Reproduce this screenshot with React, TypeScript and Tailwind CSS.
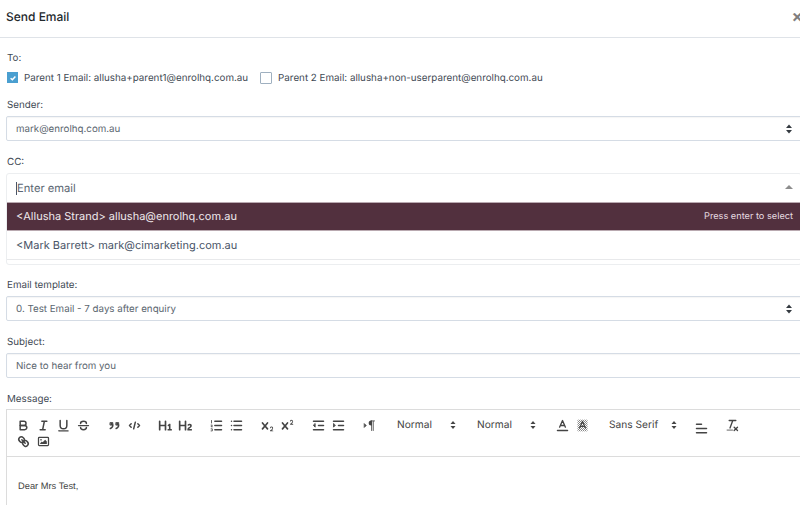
import type { ReactNode } from "react";

const font = { fontFamily: "Inter, 'Noto Sans', sans-serif" };

function Icon({ children, className = "" }: { children: ReactNode; className?: string }) {
  return (
    <svg
      viewBox="0 0 18 18"
      className={`w-[15px] h-[15px] ${className}`}
      fill="none"
      stroke="#444"
      strokeWidth={1.8}
      strokeLinecap="round"
      strokeLinejoin="round"
    >
      {children}
    </svg>
  );
}

function Btn({ children }: { children: ReactNode }) {
  return <div className="w-5 h-4 flex items-center justify-center shrink-0">{children}</div>;
}

function Group({ children }: { children: ReactNode }) {
  return <div className="flex items-center mr-[11px]">{children}</div>;
}

function Carets({ className = "" }: { className?: string }) {
  return (
    <svg viewBox="0 0 8 10" className={`w-2 h-[10px] ${className}`} fill="#343a40">
      <path d="M4 0.5 7 4H1Z" />
      <path d="M4 9.5 1 6h6Z" />
    </svg>
  );
}

function Picker({ label, width }: { label: string; width: string }) {
  return (
    <div className={`flex items-center justify-between pl-[7px] pr-[3px] h-4 text-[10.2px] text-[#444] shrink-0 ${width}`}>
      <span className="pt-[2px]">{label}</span>
      <svg viewBox="0 0 6 10" className="w-[6px] h-[10px]" fill="#444">
        <path d="M3 1 5.5 4h-5Z" />
        <path d="M3 9 .5 6h5Z" />
      </svg>
    </div>
  );
}

function SelectBox({ value }: { value: string }) {
  return (
    <div className="h-[25px] border border-[#d5dce5] rounded-[2px] flex items-center justify-between pl-[9px] pr-[8px] text-[9.75px] text-[#5c6770] shadow-[inset_0_1px_1px_rgba(0,0,0,0.04)]">
      <span className="pt-[4px]">{value}</span>
      <Carets />
    </div>
  );
}

function Label({ children, className = "" }: { children: ReactNode; className?: string }) {
  return <div className={`h-[13px] pt-[1px] text-[9.8px] leading-[13px] text-[#3f4a54] ${className}`}>{children}</div>;
}

export default function App() {
  return (
    <div className="w-[800px] h-[505px] overflow-hidden bg-white [text-rendering:geometricPrecision]" style={font}>
      <div className="w-[808px]">
        <div className="h-[38px] border-b border-[#dfe3e8] flex items-center justify-between pl-[6px] pr-[5px] pb-[3px]">
          <h5 className="text-[12px] text-[#23282c] font-medium">Send Email</h5>
          <span className="text-[17px] font-bold leading-none text-black/50">×</span>
        </div>

        <div className="px-[6px]">
          <Label className="mt-[13px] ml-px">To:</Label>
          <div className="flex items-center mt-[7px] ml-px text-[9.8px] text-[#3f4a54] h-[13px]">
            <span className="w-[11px] h-[11px] bg-[#4a9fd0] flex items-center justify-center">
              <svg viewBox="0 0 10 10" className="w-2 h-2" fill="none" stroke="#fff" strokeWidth={1.8}>
                <path d="M2 5.2 4.2 7.2 8 3" />
              </svg>
            </span>
            <span className="ml-[6px] pt-[3px]">Parent 1 Email: allusha+parent1@enrolhq.com.au</span>
            <span className="w-[12px] h-[12px] ml-[12px] border border-[#9fb0c0] rounded-[1px]" />
            <span className="ml-[6px] pt-[3px]">Parent 2 Email: allusha+non-userparent@enrolhq.com.au</span>
          </div>

          <Label className="mt-[14px] ml-px mb-[5px]">Sender:</Label>
          <SelectBox value="mark@enrolhq.com.au" />

          <Label className="mt-[14px] ml-px mb-[5px]">CC:</Label>
          <div className="h-[92px] border border-[#eceef0] rounded-[3px] text-[11px] text-[#4a5568]">
            <div className="h-[28px] flex items-center justify-between pl-[9px] pr-[8px]">
              <span className="border-l border-[#4a5568] leading-[13px] text-[#5a6672] text-[11.2px]">Enter email</span>
              <svg viewBox="0 0 8 4" className="w-2 h-1 -mt-[3px]">
                <path d="M4 0 8 4H0Z" fill="#8d8d8d" />
              </svg>
            </div>
            <div className="h-[29px] bg-[#52303e] border-y border-[#b9a9b0] flex items-center justify-between pl-[9px] pr-[8px] text-[#efe9ec]">
              <span>{"<Allusha Strand> allusha@enrolhq.com.au"}</span>
              <span className="text-[9.2px] text-[#e6dde1]">Press enter to select</span>
            </div>
            <div className="h-[29px] border-b border-[#e8e9eb] flex items-center pl-[9px]">
              {"<Mark Barrett> mark@cimarketing.com.au"}
            </div>
          </div>

          <Label className="mt-[13px] ml-px mb-[5px]">Email template:</Label>
          <SelectBox value="0. Test Email - 7 days after enquiry" />

          <Label className="mt-[14px] ml-px mb-[5px]">Subject:</Label>
          <div className="h-[25px] border border-[#d5dce5] rounded-[2px] flex items-center pl-[9px] pt-[3px] text-[9.75px] text-[#5c6770] shadow-[inset_0_1px_1px_rgba(0,0,0,0.04)]">
            Nice to hear from you
          </div>

          <Label className="mt-[14px] ml-px mb-[4px]">Message:</Label>
          <div className="border border-[#dcdcdc] h-[200px]">
            <div className="h-[47px] border-b border-[#dcdcdc] pl-[6px] pt-[7px] flex flex-wrap content-start">
              <Group>
                <Btn>
                  <Icon>
                    <path d="M5,4H9.5A2.5,2.5,0,0,1,12,6.5v0A2.5,2.5,0,0,1,9.5,9H5V4Z" />
                    <path d="M5,9h5.5A2.5,2.5,0,0,1,13,11.5v0A2.5,2.5,0,0,1,10.5,14H5V9Z" />
                  </Icon>
                </Btn>
                <Btn>
                  <Icon>
                    <path d="M7 4H13M5 14H11M8 14 10 4" />
                  </Icon>
                </Btn>
                <Btn>
                  <Icon>
                    <path d="M5,3V9a4,4,0,0,0,4,4h0a4,4,0,0,0,4-4V3" />
                    <rect x="3" y="15" width="12" height="1" rx=".5" fill="#444" strokeWidth={0.5} />
                  </Icon>
                </Btn>
                <Btn>
                  <Icon>
                    <path d="M3 9H15" strokeWidth={1.5} />
                    <path d="M12.5 6.5C12.5 5 11 4 9 4S5.5 5 5.5 6.5" />
                    <path d="M12.5 11.5C12.5 13 11 14 9 14S5.5 13 5.5 11.5" />
                  </Icon>
                </Btn>
              </Group>
              <Group>
                <Btn>
                  <Icon>
                    <rect x="4" y="5.5" width="3" height="3" fill="#444" strokeWidth={1} />
                    <rect x="11" y="5.5" width="3" height="3" fill="#444" strokeWidth={1} />
                    <path d="M7,8.5c0,2-1.5,3.5-3,4M14,8.5c0,2-1.5,3.5-3,4" />
                  </Icon>
                </Btn>
                <Btn>
                  <Icon>
                    <path d="M5 7 3 9 5 11M13 7 15 9 13 11M10 5 8 13" />
                  </Icon>
                </Btn>
              </Group>
              <Group>
                <Btn>
                  <Icon>
                    <path
                      stroke="none"
                      fill="#444"
                      d="M10,4V14a1,1,0,0,1-2,0V10H3v4a1,1,0,0,1-2,0V4A1,1,0,0,1,3,4V8H8V4a1,1,0,0,1,2,0Zm6.06787,9.209H14.98975V7.59863a.54085.54085,0,0,0-.605-.60547h-.62744a1.01119,1.01119,0,0,0-.748.29688L11.645,8.56641a.5435.5435,0,0,0-.022.8584l.28613.30762a.53861.53861,0,0,0,.84717.0332l.09912-.08789a1.2137,1.2137,0,0,0,.2417-.35254h.02246s-.01123.30859-.01123.60547V13.209H12.041a.54085.54085,0,0,0-.605.60547v.43945a.54085.54085,0,0,0,.605.60547h4.02686a.54085.54085,0,0,0,.605-.60547v-.43945A.54085.54085,0,0,0,16.06787,13.209Z"
                    />
                  </Icon>
                </Btn>
                <Btn>
                  <Icon>
                    <path
                      stroke="none"
                      fill="#444"
                      d="M16.73975,13.81445v.43945a.54085.54085,0,0,1-.605.60547H11.855a.58392.58392,0,0,1-.64893-.60547V14.0127c0-2.90527,3.39941-3.42187,3.39941-4.55469a.77675.77675,0,0,0-.84717-.78125,1.17684,1.17684,0,0,0-.83594.38477c-.2749.26367-.561.374-.85791.13184l-.4292-.34082c-.30811-.24219-.38525-.51758-.1543-.81445a2.97155,2.97155,0,0,1,2.45361-1.17676,2.45393,2.45393,0,0,1,2.68408,2.40918c0,2.45312-3.1792,2.92676-3.27832,3.93848h2.79443A.54085.54085,0,0,1,16.73975,13.81445ZM9,3A.99974.99974,0,0,0,8,4V8H3V4A1,1,0,0,0,1,4V14a1,1,0,0,0,2,0V10H8v4a1,1,0,0,0,2,0V4A.99974.99974,0,0,0,9,3Z"
                    />
                  </Icon>
                </Btn>
              </Group>
              <Group>
                <Btn>
                  <Icon>
                    <path d="M7 4H15M7 9H15M7 14H15" />
                    <path d="M3 3V6M2.5 8.5H4L2.5 10.5H4M2.5 13H4V15.5H2.5" strokeWidth={1} />
                  </Icon>
                </Btn>
                <Btn>
                  <Icon>
                    <path d="M6 4H15M6 9H15M6 14H15M3 4H3.01M3 9H3.01M3 14H3.01" />
                  </Icon>
                </Btn>
              </Group>
              <Group>
                <Btn>
                  <Icon>
                    <path
                      stroke="none"
                      fill="#444"
                      d="M15.5,15H13.861a3.858,3.858,0,0,0,1.914-2.975,1.8,1.8,0,0,0-1.6-1.751A1.921,1.921,0,0,0,12.021,11.7a0.50013,0.50013,0,1,0,.957.291h0a0.914,0.914,0,0,1,1.053-.725,0.81,0.81,0,0,1,.744.762c0,1.076-1.16971,1.86982-1.93971,2.43082A1.45639,1.45639,0,0,0,12,15.5a0.5,0.5,0,0,0,.5.5h3A0.5,0.5,0,0,0,15.5,15Z"
                    />
                    <path
                      stroke="none"
                      fill="#444"
                      d="M9.65,5.241a1,1,0,0,0-1.409.108L6,7.964,3.759,5.349A1,1,0,0,0,2.192,6.59178Q2.21541,6.6213,2.241,6.649L4.684,9.5,2.241,12.35A1,1,0,0,0,3.71,13.70722q0.02557-.02768.049-0.05722L6,11.036,8.241,13.65a1,1,0,1,0,1.567-1.24277Q9.78459,12.3777,9.759,12.35L7.316,9.5,9.759,6.651A1,1,0,0,0,9.65,5.241Z"
                    />
                  </Icon>
                </Btn>
                <Btn>
                  <Icon>
                    <path
                      stroke="none"
                      fill="#444"
                      d="M15.5,7H13.861a4.015,4.015,0,0,0,1.914-2.975,1.8,1.8,0,0,0-1.6-1.751A1.922,1.922,0,0,0,12.021,3.7a0.5,0.5,0,1,0,.957.291,0.917,0.917,0,0,1,1.053-.725,0.81,0.81,0,0,1,.744.762c0,1.077-1.164,1.925-1.934,2.486A1.423,1.423,0,0,0,12,7.5a0.5,0.5,0,0,0,.5.5h3A0.5,0.5,0,0,0,15.5,7Z"
                    />
                    <path
                      stroke="none"
                      fill="#444"
                      d="M9.65,5.241a1,1,0,0,0-1.409.108L6,7.964,3.759,5.349A1,1,0,0,0,2.192,6.59178Q2.21541,6.6213,2.241,6.649L4.684,9.5,2.241,12.35A1,1,0,0,0,3.71,13.70722q0.02557-.02768.049-0.05722L6,11.036,8.241,13.65a1,1,0,1,0,1.567-1.24277Q9.78459,12.3777,9.759,12.35L7.316,9.5,9.759,6.651A1,1,0,0,0,9.65,5.241Z"
                    />
                  </Icon>
                </Btn>
              </Group>
              <Group>
                <Btn>
                  <Icon>
                    <path d="M3 14H15M3 4H15M9 9H15" />
                    <path d="M5 7V11L3 9Z" fill="#444" strokeWidth={1} />
                  </Icon>
                </Btn>
                <Btn>
                  <Icon>
                    <path d="M3 14H15M3 4H15M9 9H15" />
                    <path d="M3 7V11L5 9Z" fill="#444" strokeWidth={1} />
                  </Icon>
                </Btn>
              </Group>
              <Group>
                <Btn>
                  <Icon>
                    <path d="M3 11 5 9 3 7Z" fill="#444" strokeWidth={1} />
                    <path d="M11,3a3,3,0,0,0,0,6h1V3Z" fill="#444" stroke="none" />
                    <path d="M11 3.5H15" strokeWidth={1} />
                    <path d="M11.5 4V15M13.5 4V15" strokeWidth={1} />
                  </Icon>
                </Btn>
              </Group>
              <div className="flex items-center mr-[11px]">
                <Picker label="Normal" width="w-[69px]" />
              </div>
              <div className="flex items-center mr-[13px]">
                <Picker label="Normal" width="w-[69px]" />
              </div>
              <div className="flex items-center mr-[10px]">
                <Btn>
                  <Icon>
                    <path d="M3 15H15" />
                    <path d="M5.5 11 9 3 12.5 11M11.6 9H6.4" strokeWidth={1.6} />
                  </Icon>
                </Btn>
                <Btn>
                  <Icon>
                    <defs>
                      <pattern id="dither" width="2.4" height="2.4" patternUnits="userSpaceOnUse">
                        <rect width="1.2" height="1.2" fill="#888" stroke="none" />
                        <rect x="1.2" y="1.2" width="1.2" height="1.2" fill="#888" stroke="none" />
                      </pattern>
                    </defs>
                    <rect x="3" y="2" width="12" height="14" fill="url(#dither)" stroke="none" />
                    <path d="M5.5 12 9 4 12.5 12M11.6 10H6.4" strokeWidth={1.4} />
                  </Icon>
                </Btn>
              </div>
              <div className="flex items-center mr-[11px]">
                <Picker label="Sans Serif" width="w-[78px]" />
              </div>
              <Group>
                <Btn>
                  <Icon className="translate-y-[3px]">
                    <path d="M3 9H15M3 14H15M3 4H9" />
                  </Icon>
                </Btn>
              </Group>
              <Group>
                <Btn>
                  <Icon>
                    <path d="M5 3H13M6 12 9.35 3M11 11 15 15M15 11 11 15" strokeWidth={1.6} />
                    <path d="M2.5 14.5H9" strokeWidth={1} />
                  </Icon>
                </Btn>
              </Group>
              <div className="flex items-center w-full">
                <Btn>
                  <Icon>
                    <path d="M7 7 11 11" />
                    <path d="M8.9,4.577a3.476,3.476,0,0,1,.36,4.679A3.476,3.476,0,0,1,4.577,8.9C3.185,7.5,2.035,6.4,4.217,4.217S7.5,3.185,8.9,4.577Z" />
                    <path d="M13.423,9.1a3.476,3.476,0,0,0-4.679-.36,3.476,3.476,0,0,0,.36,4.679c1.392,1.392,2.5,2.542,4.679.36S14.815,10.5,13.423,9.1Z" />
                  </Icon>
                </Btn>
                <Btn>
                  <Icon>
                    <rect x="3" y="4" width="12" height="10" rx="1" strokeWidth={1.5} />
                    <circle cx="6" cy="7" r="1" fill="#444" stroke="none" />
                    <path d="M5 12V11L7 9 8 10 11 7 13 9V12Z" fill="#444" stroke="none" />
                  </Icon>
                </Btn>
              </div>
            </div>
            <div
              className="pt-[23px] pl-[11px] text-[9.3px] leading-[13px] text-[#444]"
              style={{ fontFamily: "'Liberation Sans', sans-serif" }}
            >
              Dear Mrs Test,
            </div>
          </div>
        </div>
      </div>
    </div>
  );
}
